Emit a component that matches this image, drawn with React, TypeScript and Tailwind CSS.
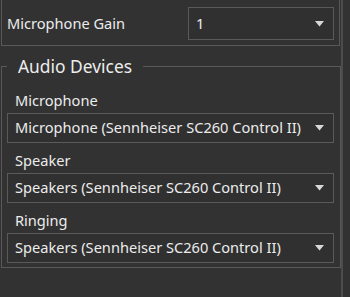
import { ReactNode } from 'react';

const font = { fontFamily: '"Noto Sans", "Open Sans", sans-serif' };

function Select({ value, className = '' }: { value: string; className?: string }) {
  return (
    <div
      className={`flex items-center justify-between border border-[#5a5a5a] bg-[#303030] pl-[7px] pr-[9px] text-[14.6px] text-[#ececec] ${className}`}
    >
      <span className="truncate">{value}</span>
      <svg width="9" height="6" viewBox="0 0 9 6" className="shrink-0">
        <path d="M0 0 H9 L4.5 5.5 Z" fill="#d8d8d8" />
      </svg>
    </div>
  );
}

function Label({ children }: { children: ReactNode }) {
  return (
    <div className="h-[30px] pl-[8px] pt-[4px] text-[14.6px] leading-[26px] text-[#ececec]">{children}</div>
  );
}

export default function App() {
  return (
    <div className="flex h-[297px] w-[350px] overflow-hidden bg-[#323232]" style={font}>
      <div className="w-[341px]">
        {/* top group, its upper edge is scrolled off */}
        <div className="ml-[1px] w-[339px] border-x border-b border-[#595959] pb-[5px] pt-[7px]">
          <div className="flex items-center justify-between px-[5px]">
            <span className="text-[14.6px] text-[#ececec]">Microphone Gain</span>
            <Select value="1" className="h-[33px] w-[146px]" />
          </div>
        </div>

        <fieldset className="ml-[1px] mt-[8px] w-[340px] border border-[#595959] px-[5px] pb-[4px] pt-0">
          <legend className="px-[11px] text-[17.4px] leading-[24px] text-[#ededed]">Audio Devices</legend>
          <div className="pt-[5px]">
            <Label>Microphone</Label>
            <Select value="Microphone (Sennheiser SC260 Control II)" className="h-[30px] w-[327px]" />
            <Label>Speaker</Label>
            <Select value="Speakers (Sennheiser SC260 Control II)" className="h-[30px] w-[327px]" />
            <Label>Ringing</Label>
            <Select value="Speakers (Sennheiser SC260 Control II)" className="h-[30px] w-[327px]" />
          </div>
        </fieldset>
      </div>
      <div className="h-full w-[2px] bg-[#4c4c4c]" />
    </div>
  );
}
